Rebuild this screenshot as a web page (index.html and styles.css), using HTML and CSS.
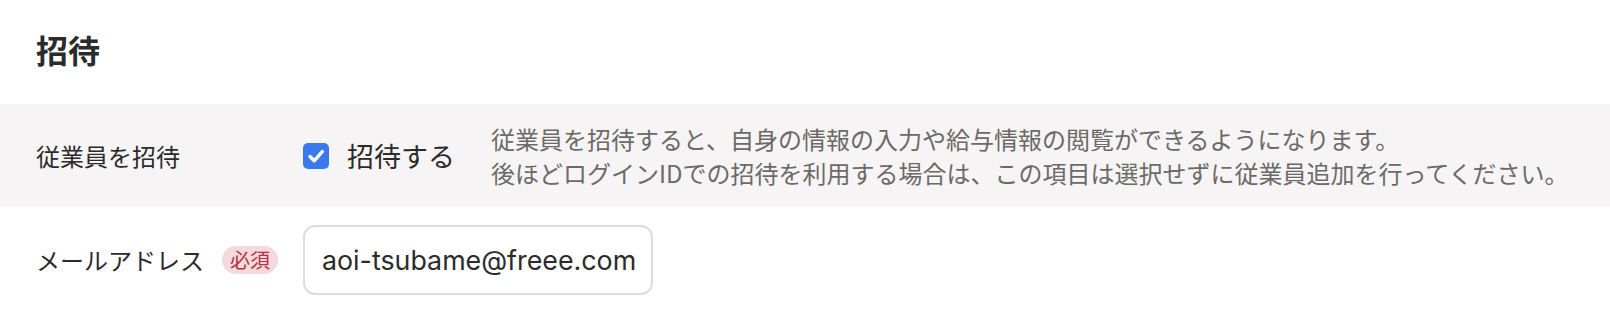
FILE: index.html
```html
<!DOCTYPE html>
<html lang="ja">
<head>
    <meta charset="UTF-8">
    <meta name="viewport" content="width=device-width, initial-scale=1.0">
    <title>招待</title>
    <link rel="stylesheet" href="styles.css">
</head>
<body>
    <section class="invite">
        <h2 class="invite-title">招待</h2>

        <div class="form-row form-row--shaded">
            <div class="form-label">従業員を招待</div>
            <div class="form-field">
                <label class="check">
                    <span class="check-box">
                        <svg width="26" height="26" viewBox="0 0 26 26">
                            <path d="M7 13.5 L11.2 17.8 L19.3 8.6" fill="none" stroke="#fff" stroke-width="3.4" stroke-linecap="round" stroke-linejoin="round"/>
                        </svg>
                    </span>
                    <span class="check-text">招待する</span>
                </label>
                <p class="form-help">
                    従業員を招待すると、自身の情報の入力や給与情報の閲覧ができるようになります。<br>
                    後ほどログインIDでの招待を利用する場合は、この項目は選択せずに従業員追加を行ってください。
                </p>
            </div>
        </div>

        <div class="form-row">
            <div class="form-label">
                メールアドレス
                <span class="badge-required">必須</span>
            </div>
            <div class="form-field">
                <input class="text-input" type="text" value="aoi-tsubame@freee.com">
            </div>
        </div>
    </section>
</body>
</html>
```

FILE: styles.css
```css
body {
    margin: 0;
    background: #fff;
    color: #2b2b2b;
    font-family: "Noto Sans CJK JP", "Noto Sans", sans-serif;
}

.invite-title {
    margin: 0;
    padding: 25px 36px 31px;
    font-size: 32px;
    line-height: 48px;
    font-weight: bold;
}

.form-row {
    display: flex;
    align-items: center;
    padding: 18px 0 17px 36px;
}

.form-row--shaded {
    background: #f6f4f5;
}

.form-label {
    display: flex;
    align-items: center;
    width: 267px;
    flex-shrink: 0;
    font-size: 24px;
    line-height: 34px;
}

.form-field {
    display: flex;
    align-items: center;
}

.check {
    display: flex;
    align-items: center;
    gap: 18px;
    margin-right: 36px;
}

.check-box {
    display: block;
    width: 26px;
    height: 26px;
    border-radius: 5px;
    background: #3a78ee;
}

.check-box svg {
    display: block;
}

.check-text {
    font-size: 27px;
    line-height: 34px;
}

.form-help {
    margin: 0;
    font-size: 24px;
    line-height: 34px;
    color: #6c6a66;
}

.badge-required {
    margin-left: 18px;
    padding: 0 8px;
    height: 28px;
    border-radius: 14px;
    background: #f6d9dc;
    color: #b23241;
    font-size: 20px;
    line-height: 28px;
}

.text-input {
    box-sizing: border-box;
    width: 350px;
    height: 70px;
    padding: 0 6px 0 17px;
    border: 2px solid #dddddd;
    border-radius: 12px;
    font-family: Inter, "Noto Sans CJK JP", sans-serif;
    font-size: 26.8px;
    color: #2b2b2b;
    outline: none;
}
```
